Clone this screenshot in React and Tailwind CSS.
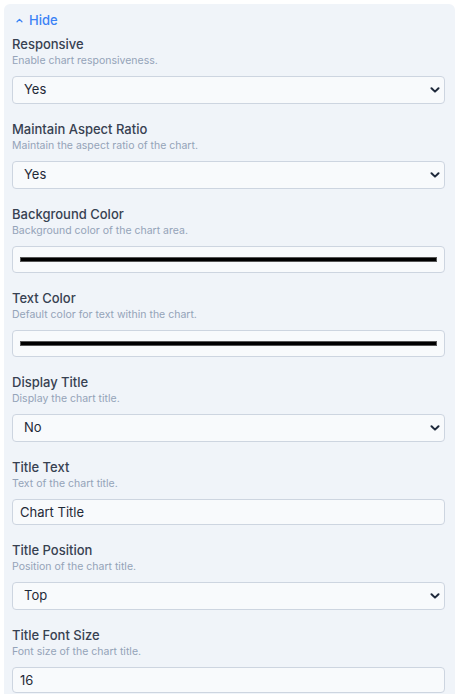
import { useState } from 'react';

const fields = [
  { label: 'Responsive', desc: 'Enable chart responsiveness.', type: 'select', value: 'Yes', options: ['Yes', 'No'] },
  { label: 'Maintain Aspect Ratio', desc: 'Maintain the aspect ratio of the chart.', type: 'select', value: 'Yes', options: ['Yes', 'No'] },
  { label: 'Background Color', desc: 'Background color of the chart area.', type: 'color' },
  { label: 'Text Color', desc: 'Default color for text within the chart.', type: 'color' },
  { label: 'Display Title', desc: 'Display the chart title.', type: 'select', value: 'No', options: ['Yes', 'No'] },
  { label: 'Title Text', desc: 'Text of the chart title.', type: 'text', value: 'Chart Title' },
  { label: 'Title Position', desc: 'Position of the chart title.', type: 'select', value: 'Top', options: ['Top', 'Bottom', 'Left', 'Right'] },
  { label: 'Title Font Size', desc: 'Font size of the chart title.', type: 'text', value: '16' },
];

const Chevron = ({ className }) => (
  <svg viewBox="0 0 10 6" className={className} fill="none" stroke="currentColor" strokeWidth="2" strokeLinecap="round" strokeLinejoin="round">
    <path d="M1.5 1.2 5 4.6 8.5 1.2" />
  </svg>
);

const Field = ({ field }) => {
  const [value, setValue] = useState(field.value);

  return (
    <div className="flex flex-col">
      <label className="text-[13px] leading-5 font-medium text-[#374151]">{field.label}</label>
      <p className="text-[10.5px] leading-[14px] text-[#94a3b8]">{field.desc}</p>
      <div className="mt-[8px] mb-[15px]">
        {field.type === 'select' && (
          <div className="relative">
            <select
              value={value}
              onChange={(e) => setValue(e.target.value)}
              className="appearance-none w-full h-[28px] pl-[11px] pr-8 rounded-[4px] border border-[#cdd5e0] bg-[#f8fafc] text-[13px] text-[#1f2937] outline-none"
            >
              {field.options.map((o) => (
                <option key={o}>{o}</option>
              ))}
            </select>
            <Chevron className="absolute right-[5px] top-[11px] w-[10px] h-[6px] text-[#1e293b] pointer-events-none" />
          </div>
        )}
        {field.type === 'text' && (
          <input
            type="text"
            value={value}
            onChange={(e) => setValue(e.target.value)}
            className="w-full h-[26px] px-[7px] rounded-[4px] border border-[#cdd5e0] bg-[#f8fafc] text-[13px] text-[#1f2937] outline-none"
          />
        )}
        {field.type === 'color' && (
          <div className="w-full h-[27px] rounded-[4px] border border-[#cdd5e0] bg-[#f8fafc] flex items-center px-[7px]">
            <div className="w-full h-[5px] bg-black border border-[#555]" />
          </div>
        )}
      </div>
    </div>
  );
};

export default function App() {
  return (
    <div className="bg-white min-h-[694px] pt-[4px] pl-[4px] pr-[5px]" style={{ fontFamily: 'Inter, "Noto Sans", sans-serif' }}>
      <div className="bg-[#f0f4f9] rounded-t-[6px] pl-[8px] pr-[10px] pt-[6px]">
        <button className="flex items-center gap-[6px] pl-[4px] text-[13px] leading-5 font-medium text-[#3b82f6]">
          <svg viewBox="0 0 10 6" className="w-[7px] h-[5px]" fill="none" stroke="currentColor" strokeWidth="1.8" strokeLinecap="round" strokeLinejoin="round">
            <path d="M1.5 4.8 5 1.4 8.5 4.8" />
          </svg>
          Hide
        </button>
        <div className="mt-[4px] flex flex-col">
          {fields.map((f) => (
            <Field key={f.label} field={f} />
          ))}
        </div>
      </div>
    </div>
  );
}
